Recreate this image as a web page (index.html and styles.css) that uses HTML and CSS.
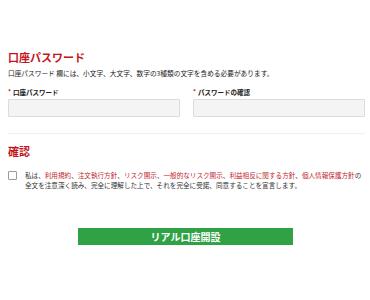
FILE: index.html
```html
<!DOCTYPE html>
<html lang="ja">
<head>
<meta charset="utf-8">
<link rel="stylesheet" href="styles.css">
</head>
<body>
<main class="page">
  <section class="section">
    <h2 class="title">口座パスワード</h2>
    <p class="desc">口座パスワード 欄には、小文字、大文字、数字の3種類の文字を含める必要があります。</p>
    <div class="fields">
      <div class="field">
        <label class="label"><span class="req">*</span>口座パスワード</label>
        <input class="input" type="password">
      </div>
      <div class="field">
        <label class="label"><span class="req">*</span>パスワードの確認</label>
        <input class="input" type="password">
      </div>
    </div>
  </section>
  <hr class="sep">
  <section class="section confirm">
    <h2 class="title">確認</h2>
    <div class="agree">
      <span class="box"></span>
      <p class="agree-text">私は、<span class="link">利用規約</span>、<span class="link">注文執行方針</span>、<span class="link">リスク開示</span>、<span class="link">一般的なリスク開示</span>、<span class="link">利益相反に関する方針</span>、<span class="link">個人情報保護方針</span>の<br>全文を注意深く読み、完全に理解した上で、それを完全に受諾、同意することを宣言します。</p>
    </div>
  </section>
  <div class="actions">
    <button class="btn">リアル口座開設</button>
  </div>
</main>
</body>
</html>
```
FILE: styles.css
```css
html, body {
  margin: 0;
  padding: 0;
  background: #ffffff;
}
body {
  font-family: "Noto Sans CJK JP", "Noto Sans", sans-serif;
  color: #222;
}
.page {
  padding: 50px 5px 0 8px;
}
.section {
  margin: 0;
}
.title {
  margin: 0;
  font-size: 11px;
  line-height: 14px;
  font-weight: 700;
  color: #c3161c;
}
.desc {
  margin: 4px 0 0;
  font-size: 6.7px;
  line-height: 10px;
  color: #1a1a1a;
}
.fields {
  display: grid;
  grid-template-columns: 172px 172px;
  column-gap: 13px;
  margin-top: 9px;
}
.field {
  display: flex;
  flex-direction: column;
}
.label {
  font-size: 6.5px;
  line-height: 10px;
  font-weight: 700;
  color: #222;
  display: flex;
  align-items: center;
}
.req {
  color: #c3161c;
  margin-right: 2px;
  font-size: 6px;
}
.input {
  margin-top: 2px;
  height: 18px;
  box-sizing: border-box;
  border: 1px solid #dcdcdc;
  background: #f4f4f4;
  border-radius: 1px;
  padding: 0;
  width: 100%;
}
.sep {
  border: 0;
  border-top: 1px solid #f0f0f0;
  margin: 16px 0 0 0;
  width: 357px;
}
.confirm {
  margin-top: 10px;
}
.agree {
  display: flex;
  align-items: flex-start;
  margin-top: 12px;
}
.box {
  flex: none;
  width: 9px;
  height: 9px;
  box-sizing: border-box;
  border: 1px solid #9a9a9a;
  border-radius: 1px;
  background: #fff;
  margin-top: 1px;
}
.agree-text {
  margin: 0 0 0 8px;
  font-size: 6.6px;
  line-height: 10px;
  color: #333;
  white-space: nowrap;
}
.link {
  color: #c0282d;
}
.actions {
  padding: 38px 0 0 70px;
}
.btn {
  display: flex;
  align-items: center;
  justify-content: center;
  width: 215px;
  height: 17px;
  border: 0;
  padding: 0;
  background: #2ea244;
  color: #fff;
  font-family: "Noto Sans CJK JP", sans-serif;
  font-size: 10px;
  font-weight: 700;
}
```
